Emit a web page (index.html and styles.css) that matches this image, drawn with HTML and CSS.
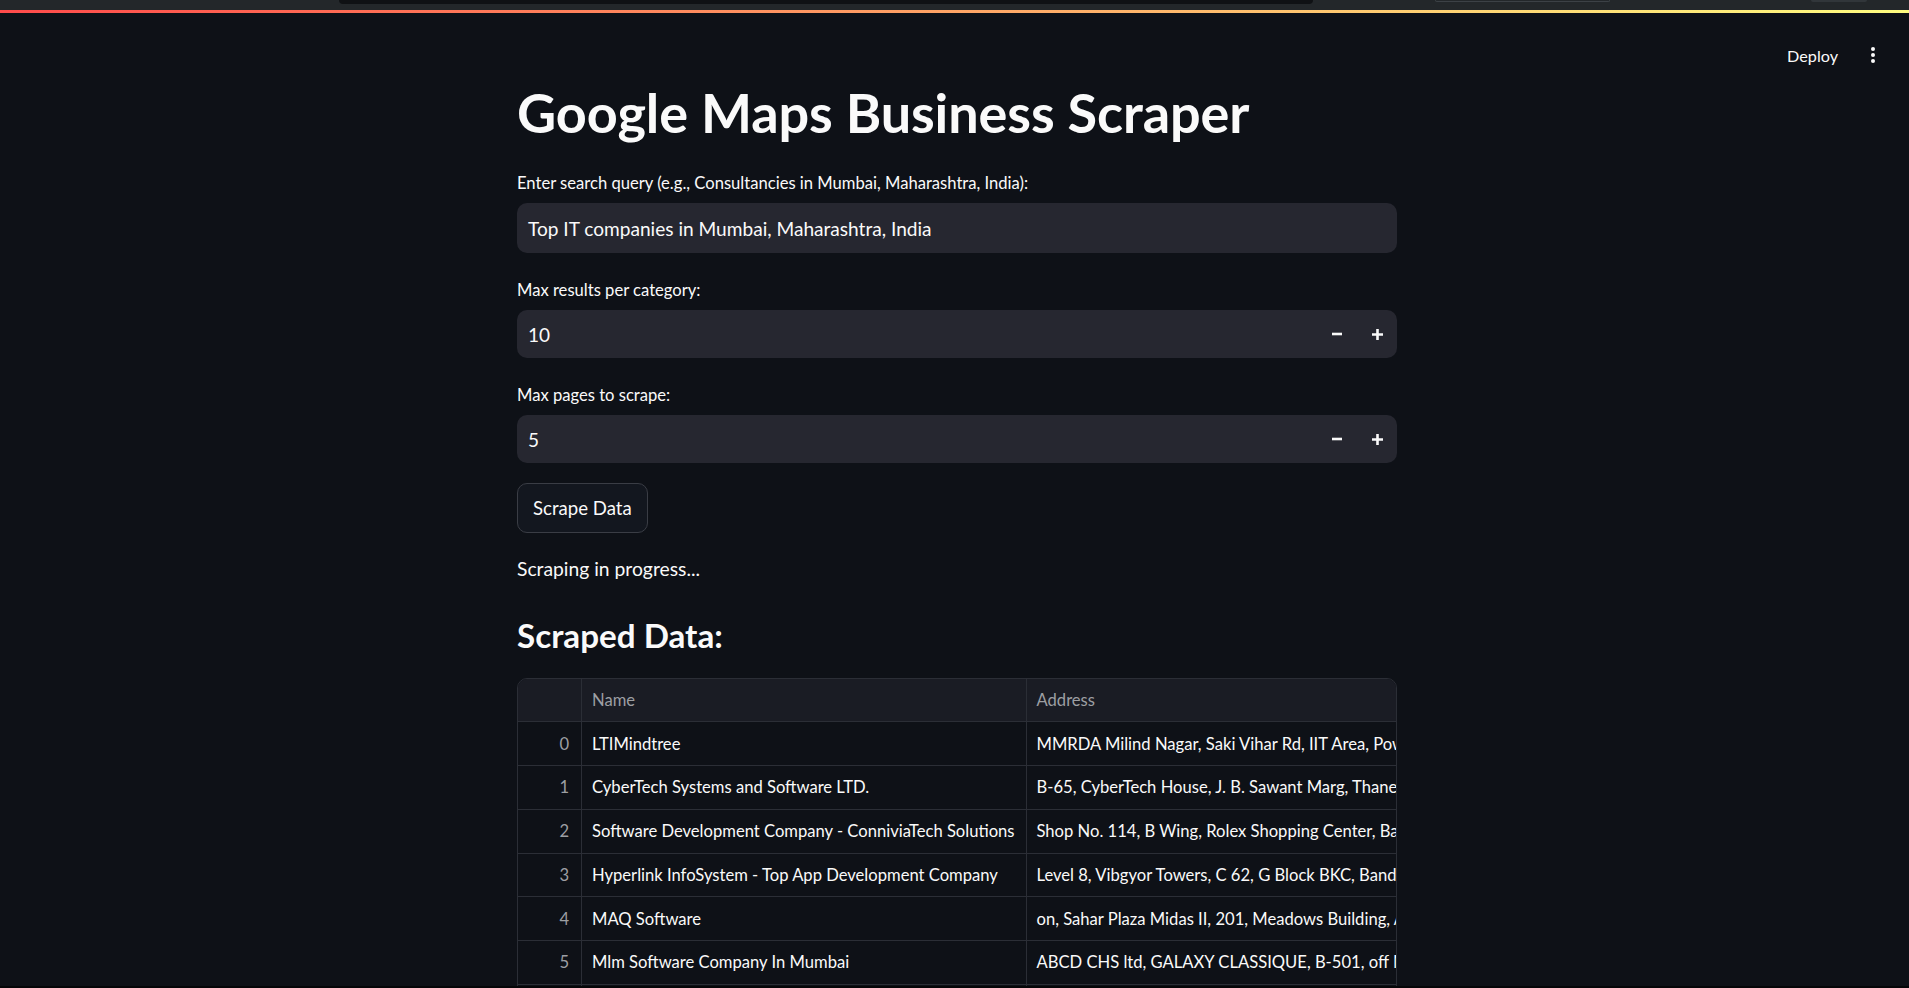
FILE: index.html
```html
<!DOCTYPE html>
<html lang="en">
<head>
<meta charset="utf-8">
<title>Google Maps Business Scraper</title>
<link rel="stylesheet" href="styles.css">
</head>
<body>
<div class="chrome">
  <div class="chrome-tab"></div>
  <div class="chrome-field"></div>
  <div class="chrome-btn"></div>
</div>
<div class="decoration"></div>
<header class="toolbar">
  <span class="deploy">Deploy</span>
  <svg class="kebab" width="4" height="16" viewBox="0 0 4 16"><circle cx="2" cy="2" r="2" fill="#fafafa"/><circle cx="2" cy="8" r="2" fill="#fafafa"/><circle cx="2" cy="14" r="2" fill="#fafafa"/></svg>
</header>
<div class="page">
  <main class="main">
    <h1 class="title">Google Maps Business Scraper</h1>

    <div class="widget">
      <label class="label">Enter search query (e.g., Consultancies in Mumbai, Maharashtra, India):</label>
      <div class="text-input">Top IT companies in Mumbai, Maharashtra, India</div>
    </div>

    <div class="widget">
      <label class="label">Max results per category:</label>
      <div class="number-input">
        <span class="number-value">10</span>
        <span class="step"><svg width="10" height="10" viewBox="0 0 10 10"><path d="M0 5H10" stroke="#fafafa" stroke-width="2.6"/></svg></span>
        <span class="step"><svg width="11" height="11" viewBox="0 0 11 11"><path d="M5.5 0V11M0 5.5H11" stroke="#fafafa" stroke-width="2.6"/></svg></span>
      </div>
    </div>

    <div class="widget">
      <label class="label">Max pages to scrape:</label>
      <div class="number-input">
        <span class="number-value">5</span>
        <span class="step"><svg width="10" height="10" viewBox="0 0 10 10"><path d="M0 5H10" stroke="#fafafa" stroke-width="2.6"/></svg></span>
        <span class="step"><svg width="11" height="11" viewBox="0 0 11 11"><path d="M5.5 0V11M0 5.5H11" stroke="#fafafa" stroke-width="2.6"/></svg></span>
      </div>
    </div>

    <div><button class="btn">Scrape Data</button></div>

    <p class="status">Scraping in progress...</p>

    <h3 class="subtitle">Scraped Data:</h3>

    <div class="table-wrap">
      <div class="grid">
        <div class="cell head idx"></div><div class="cell head">Name</div><div class="cell head">Address</div>
        <div class="cell idx">0</div><div class="cell">LTIMindtree</div><div class="cell">MMRDA Milind Nagar, Saki Vihar Rd, IIT Area, Powai, Mumbai, Maharashtra 400072</div>
        <div class="cell idx">1</div><div class="cell">CyberTech Systems and Software LTD.</div><div class="cell">B-65, CyberTech House, J. B. Sawant Marg, Thane, Wagle Industrial Estate, Thane West, Maharashtra 400604</div>
        <div class="cell idx">2</div><div class="cell">Software Development Company - ConniviaTech Solutions</div><div class="cell">Shop No. 114, B Wing, Rolex Shopping Center, Bandra West, Mumbai, Maharashtra 400050</div>
        <div class="cell idx">3</div><div class="cell">Hyperlink InfoSystem - Top App Development Company</div><div class="cell">Level 8, Vibgyor Towers, C 62, G Block BKC, Bandra Kurla Complex, Bandra East, Mumbai, Maharashtra 400051</div>
        <div class="cell idx">4</div><div class="cell">MAQ Software</div><div class="cell">on, Sahar Plaza Midas II, 201, Meadows Building, Andheri - Kurla Rd, Andheri East, Mumbai, Maharashtra 400059</div>
        <div class="cell idx">5</div><div class="cell">Mlm Software Company In Mumbai</div><div class="cell">ABCD CHS ltd, GALAXY CLASSIQUE, B-501, off Mahakali Caves Road, Andheri East, Mumbai, Maharashtra 400093</div>
        <div class="cell idx">6</div><div class="cell">Tata Consultancy Services</div><div class="cell">Nirmal Building, Nariman Point, Mumbai, Maharashtra 400021</div>
      </div>
    </div>
  </main>
</div>
<div class="window-edge"></div>
</body>
</html>
```

FILE: styles.css
```css
* { box-sizing: border-box; }

html, body {
  margin: 0;
  padding: 0;
  height: 100%;
}

body {
  background: #0e1117;
  color: #fafafa;
  font-family: Lato, "Liberation Sans", sans-serif;
  overflow: hidden;
  position: relative;
}

/* browser chrome remnant */
.chrome {
  height: 10px;
  background: #23272a;
  display: flex;
  align-items: flex-start;
}
.chrome-tab {
  margin-left: 339px;
  width: 974px;
  height: 4px;
  background: #0f1114;
  border-radius: 0 0 5px 5px;
}
.chrome-field {
  margin-left: 122px;
  width: 175px;
  height: 2px;
  border: 1px solid #3c4146;
  border-top: none;
  border-radius: 0 0 4px 4px;
}
.chrome-btn {
  margin-left: 201px;
  width: 56px;
  height: 2px;
  background: #31363a;
  border-radius: 0 0 3px 3px;
}

.decoration {
  height: 3px;
  background: linear-gradient(90deg, #ff4b4b, #fffd80);
}

.toolbar {
  position: absolute;
  top: 13px;
  right: 0;
  height: 84px;
  display: flex;
  align-items: center;
  gap: 33px;
  padding-right: 34px;
}
.deploy {
  font-size: 16.2px;
  color: #fafafa;
}
.kebab { display: block; }

.page {
  display: flex;
  justify-content: center;
  padding-left: 5px;
}

.main {
  width: 880px;
  padding-top: 67px;
  display: flex;
  flex-direction: column;
  gap: 20px;
}

.title {
  margin: 0;
  font-size: 54px;
  font-weight: 700;
  line-height: 66px;
  letter-spacing: -0.1px;
}

.widget {
  display: flex;
  flex-direction: column;
}

.label {
  font-size: 16.6px;
  line-height: 35px;
  height: 35px;
  margin-bottom: 2px;
}

.text-input {
  height: 50px;
  background: #262730;
  border-radius: 10px;
  padding: 0 11px;
  font-size: 19.1px;
  display: flex;
  align-items: center;
}

.number-input {
  height: 48px;
  background: #262730;
  border-radius: 10px;
  display: flex;
  align-items: center;
  padding-left: 11px;
  font-size: 19px;
}
.number-value { flex: 1; }
.step {
  width: 40px;
  height: 100%;
  display: flex;
  align-items: center;
  justify-content: center;
}
.step svg { display: block; }

.btn {
  height: 50px;
  padding: 0 15px;
  background: #13171f;
  border: 1px solid #3a3d45;
  border-radius: 10px;
  color: #fafafa;
  font-family: inherit;
  font-size: 18.6px;
  cursor: pointer;
}

.status {
  margin: 0;
  font-size: 19.3px;
  line-height: 32px;
}

.subtitle {
  margin: 0;
  padding: 8.5px 0 2px;
  font-size: 33.2px;
  font-weight: 700;
  line-height: 42px;
}

.table-wrap {
  width: 880px;
  border: 1px solid #2b2e36;
  border-radius: 10px;
  overflow: hidden;
}
.grid {
  display: grid;
  grid-template-columns: 64px 444.5px 720px;
  grid-auto-rows: 43.75px;
}
.cell {
  border-right: 1px solid #2b2e36;
  border-bottom: 1px solid #2b2e36;
  padding: 0 10px;
  font-size: 16.6px;
  white-space: nowrap;
  overflow: hidden;
  display: flex;
  align-items: center;
}
.cell.head {
  background: #1a1c24;
  color: #9d9fa3;
}
.cell.idx {
  justify-content: flex-end;
  padding-right: 12px;
  color: #9d9fa3;
}

.window-edge {
  position: fixed;
  left: 0;
  right: 0;
  bottom: 0;
  height: 2px;
  background: #050608;
}
```
